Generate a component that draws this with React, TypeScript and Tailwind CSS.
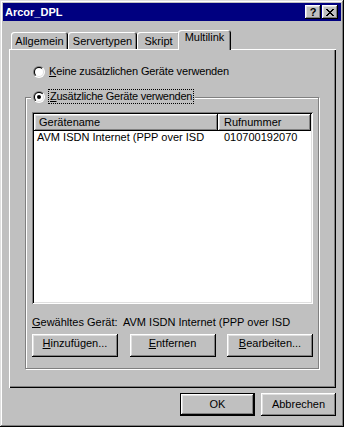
import React from "react";

// win98 bevels
const raised =
  "shadow-[inset_-1px_-1px_0_#000,inset_1px_1px_0_#fff,inset_-2px_-2px_0_#808080,inset_2px_2px_0_#dfdfdf]";
const sunken =
  "shadow-[inset_1px_1px_0_#808080,inset_-1px_-1px_0_#fff,inset_2px_2px_0_#000,inset_-2px_-2px_0_#dfdfdf]";

function Radio({ id, checked }: { id: string; checked?: boolean }) {
  return (
    <svg width="12" height="12" viewBox="0 0 12 12" className="block shrink-0">
      <defs>
        <linearGradient id={`${id}o`} x1="0" y1="0" x2="1" y2="1">
          <stop offset="0.5" stopColor="#808080" />
          <stop offset="0.5" stopColor="#ffffff" />
        </linearGradient>
        <linearGradient id={`${id}i`} x1="0" y1="0" x2="1" y2="1">
          <stop offset="0.5" stopColor="#000000" />
          <stop offset="0.5" stopColor="#dfdfdf" />
        </linearGradient>
      </defs>
      <circle cx="6" cy="6" r="6" fill={`url(#${id}o)`} />
      <circle cx="6" cy="6" r="5" fill={`url(#${id}i)`} />
      <circle cx="6" cy="6" r="4" fill="#fff" />
      {checked && <circle cx="6" cy="6" r="2" fill="#000" />}
    </svg>
  );
}

function CloseGlyph() {
  const rows: [number, number][][] = [
    [[0, 2], [6, 2]],
    [[1, 2], [5, 2]],
    [[2, 4]],
    [[3, 2]],
    [[2, 4]],
    [[1, 2], [5, 2]],
    [[0, 2], [6, 2]],
  ];
  return (
    <svg width="8" height="7" viewBox="0 0 8 7" shapeRendering="crispEdges">
      {rows.map((r, y) =>
        r.map(([x, w]) => <rect key={`${y}-${x}`} x={x} y={y} width={w} height={1} fill="#000" />)
      )}
    </svg>
  );
}

function Tab({ label, w }: { label: string; w: string }) {
  return (
    <div
      className={`${w} h-[17px] pt-[3px] leading-[13px] text-center rounded-t-[3px] bg-[#c0c0c0] shadow-[inset_1px_1px_0_#fff,inset_-1px_0_0_#000,inset_-2px_0_0_#808080]`}
    >
      {label}
    </div>
  );
}

function Btn({ children, w }: { children: React.ReactNode; w: string }) {
  return (
    <div className={`${w} h-[23px] pt-[3px] leading-[13px] text-center bg-[#c0c0c0] ${raised}`}>
      {children}
    </div>
  );
}

export default function App() {
  return (
    <div className="w-[344px] h-[427px] p-[3px] flex flex-col bg-[#c0c0c0] text-[11px] text-black font-['Liberation_Sans',Arial,sans-serif] shadow-[inset_-1px_-1px_0_#000,inset_1px_1px_0_#dfdfdf,inset_-2px_-2px_0_#808080,inset_2px_2px_0_#fff]">
      {/* Title bar */}
      <div className="h-[18px] flex items-center bg-[#000080] pl-[2px] pr-[3px]">
        <span className="flex-1 font-bold text-white leading-[13px]">Arcor_DPL</span>
        <div className={`w-[16px] h-[14px] flex items-center justify-center bg-[#c0c0c0] font-bold leading-none ${raised}`}>
          ?
        </div>
        <div className={`ml-[1px] w-[16px] h-[14px] flex items-center justify-center bg-[#c0c0c0] ${raised}`}>
          <CloseGlyph />
        </div>
      </div>

      <div className="pl-[6px] pt-[9px] flex flex-col">
        {/* Tabs */}
        <div className="flex items-end h-[19px] pl-[2px]">
          <Tab label="Allgemein" w="w-[57px]" />
          <Tab label="Servertypen" w="w-[69px]" />
          <Tab label="Skript" w="w-[43px]" />
          <div className="relative z-10 -ml-[2px] -mb-[1px] w-[53px] h-[20px] pt-[1px] leading-[13px] text-center rounded-t-[3px] bg-[#c0c0c0] shadow-[inset_1px_1px_0_#fff,inset_-1px_0_0_#000,inset_-2px_0_0_#808080]">
            Multilink
          </div>
        </div>

        {/* Panel */}
        <div className="w-[327px] h-[339px] pt-[16px] flex flex-col bg-[#c0c0c0] shadow-[inset_1px_1px_0_#fff,inset_-1px_-1px_0_#000,inset_-2px_-2px_0_#808080]">
          <div className="flex items-center h-[13px] pl-[24px]">
            <Radio id="r1" />
            <span className="ml-[4px] leading-[13px] tracking-[-0.15px]">
              <span className="underline">K</span>eine zusätzlichen Geräte verwenden
            </span>
          </div>

          {/* Group box */}
          <div className="ml-[16px] mt-[19px] w-[294px] pb-[11px] flex flex-col border border-[#808080] shadow-[inset_1px_1px_0_#fff,1px_1px_0_#fff]">
            <div className="-mt-[9px] ml-[5px] self-start h-[15px] flex items-center pl-[2px] pr-[1px] bg-[#c0c0c0]">
              <Radio id="r2" checked />
              <span className="ml-[3px] h-[15px] px-[1px] leading-[13px] tracking-[-0.25px] border border-dotted border-black">
                <span className="underline">Z</span>usätzliche Geräte verwenden
              </span>
            </div>

            {/* List */}
            <div className={`mt-[8px] ml-[6px] w-[281px] h-[192px] p-[2px] flex flex-col bg-white ${sunken}`}>
              <div className="flex h-[17px]">
                <div className={`w-[184px] pt-[2px] pl-[5px] leading-[13px] bg-[#c0c0c0] ${raised}`}>
                  Gerätename
                </div>
                <div className={`flex-1 pt-[2px] pl-[6px] leading-[13px] bg-[#c0c0c0] ${raised}`}>
                  Rufnummer
                </div>
              </div>
              <div className="flex h-[13px] leading-[13px]">
                <div className="w-[184px] pl-[3px] whitespace-nowrap">AVM ISDN Internet (PPP over ISD</div>
                <div className="pl-[6px]">010700192070</div>
              </div>
            </div>

            <div className="mt-[12px] ml-[6px] flex h-[13px] leading-[13px] whitespace-nowrap">
              <span className="w-[91px]">
                <span className="underline">G</span>ewähltes Gerät:
              </span>
              <span>AVM ISDN Internet (PPP over ISD</span>
            </div>

            <div className="mt-[5px] ml-[6px] w-[281px] flex justify-between">
              <Btn w="w-[86px]">
                <span className="underline">H</span>inzufügen...
              </Btn>
              <Btn w="w-[86px]">
                <span className="underline">E</span>ntfernen
              </Btn>
              <Btn w="w-[86px]">
                <span className="underline">B</span>earbeiten...
              </Btn>
            </div>
          </div>
        </div>

        {/* Dialog buttons */}
        <div className="mt-[5px] w-[327px] flex justify-end gap-[6px]">
          <div className="w-[75px] h-[23px] border border-black">
            <div className={`h-full flex items-center justify-center leading-[13px] bg-[#c0c0c0] ${raised}`}>OK</div>
          </div>
          <div className={`w-[75px] h-[23px] flex items-center justify-center leading-[13px] bg-[#c0c0c0] ${raised}`}>
            Abbrechen
          </div>
        </div>
      </div>
    </div>
  );
}
